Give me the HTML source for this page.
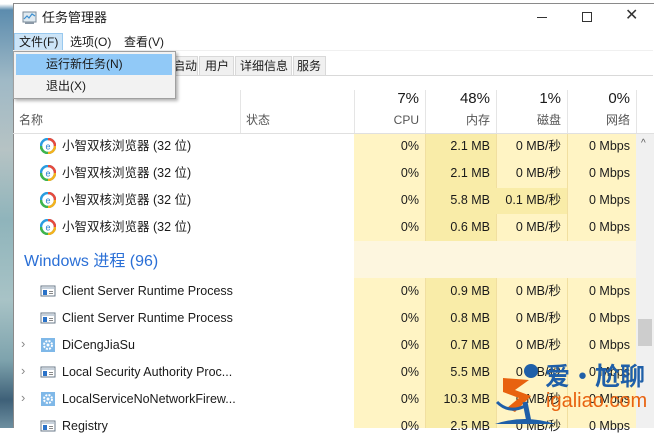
<!DOCTYPE html>
<html><head><meta charset="utf-8"><style>
*{margin:0;padding:0;box-sizing:border-box}
body{width:654px;height:428px;overflow:hidden;background:#fff;font-family:"Liberation Sans","Noto Sans CJK SC",sans-serif;font-size:12px;color:#1a1a1a;position:relative;line-height:16px}
.a{position:absolute;white-space:nowrap}
.strip{left:0;top:0;width:13px;height:428px;background:linear-gradient(#fff 0,#fff 4px,#5c8cae 10px,#9fb9c6 80px,#b6c3c4 150px,#8fb4bb 220px,#a8c3c6 300px,#7ea3ad 360px,#3e6078 400px,#6d8fa0 428px)}
.win{left:13px;top:3px;width:641px;height:425px;background:#fff;border-left:1px solid #8a8a8a;border-top:1px solid #8a8a8a}
.col{top:134px;height:294px}
.r{text-align:right}
.v{font-size:12.5px;height:16px;line-height:16px}
</style></head><body>
<div class="a strip"></div>
<div class="a win"></div>
<svg class="a" style="left:22px;top:10px" width="16" height="16" viewBox="0 0 16 16"><rect x="1" y="2" width="13" height="10" fill="#dfe9f0" stroke="#7a8a99"/><polyline points="2,9 5,6 7,8 10,4 13,6" fill="none" stroke="#3c8fd0" stroke-width="1.2"/><rect x="3" y="12" width="9" height="2" fill="#8a98a6"/></svg>
<div class="a" style="left:42px;top:10px;font-size:13px">任务管理器</div>
<div class="a" style="left:537px;top:17px;width:10px;height:1px;background:#333"></div>
<div class="a" style="left:582px;top:12px;width:10px;height:10px;border:1px solid #333"></div>
<div class="a" style="left:625px;top:8px;font-size:16px;color:#333">✕</div>
<div class="a" style="left:14px;top:33px;width:49px;height:19px;background:#cce4f7;border:1px solid #99c9ef"></div>
<div class="a" style="left:19px;top:34px">文件(F)</div>
<div class="a" style="left:70px;top:34px">选项(O)</div>
<div class="a" style="left:124px;top:34px">查看(V)</div>
<div class="a" style="left:13px;top:50px;width:640px;height:1px;background:#f0f0f0"></div>
<div class="a" style="left:150px;top:55px;width:503px;height:21px;border-bottom:1px solid #d9d9d9"></div>
<div class="a" style="left:150px;top:56px;width:48px;height:20px;border:1px solid #d9d9d9;background:#f0f0f0"></div>
<div class="a" style="left:173px;top:58px">启动</div>
<div class="a" style="left:199px;top:56px;width:35px;height:20px;border:1px solid #d9d9d9;background:#f0f0f0"></div>
<div class="a" style="left:205px;top:58px">用户</div>
<div class="a" style="left:235px;top:56px;width:57px;height:20px;border:1px solid #d9d9d9;background:#f0f0f0"></div>
<div class="a" style="left:240px;top:58px">详细信息</div>
<div class="a" style="left:293px;top:56px;width:33px;height:20px;border:1px solid #d9d9d9;background:#f0f0f0"></div>
<div class="a" style="left:297px;top:58px">服务</div>
<div class="a" style="left:13px;top:51px;width:163px;height:48px;background:#f2f2f2;border:1px solid #a0a0a0;box-shadow:2px 2px 3px rgba(0,0,0,.3)"></div>
<div class="a" style="left:16px;top:54px;width:156px;height:21px;background:#91c9f7"></div>
<div class="a" style="left:46px;top:56px">运行新任务(N)</div>
<div class="a" style="left:46px;top:78px">退出(X)</div>
<div class="a" style="left:240px;top:90px;width:1px;height:44px;background:#e5e5e5"></div>
<div class="a" style="left:354px;top:90px;width:1px;height:44px;background:#e5e5e5"></div>
<div class="a" style="left:425px;top:90px;width:1px;height:44px;background:#e5e5e5"></div>
<div class="a" style="left:496px;top:90px;width:1px;height:44px;background:#e5e5e5"></div>
<div class="a" style="left:567px;top:90px;width:1px;height:44px;background:#e5e5e5"></div>
<div class="a" style="left:636px;top:90px;width:1px;height:44px;background:#e5e5e5"></div>
<div class="a" style="left:19px;top:112px;color:#555">名称</div>
<div class="a" style="left:246px;top:112px;color:#555">状态</div>
<div class="a r" style="left:354px;width:65px;top:91px;font-size:15px">7%</div>
<div class="a r" style="left:354px;width:65px;top:112px;color:#555">CPU</div>
<div class="a r" style="left:425px;width:65px;top:91px;font-size:15px">48%</div>
<div class="a r" style="left:425px;width:65px;top:112px;color:#555">内存</div>
<div class="a r" style="left:496px;width:65px;top:91px;font-size:15px">1%</div>
<div class="a r" style="left:496px;width:65px;top:112px;color:#555">磁盘</div>
<div class="a r" style="left:567px;width:63px;top:91px;font-size:15px">0%</div>
<div class="a r" style="left:567px;width:63px;top:112px;color:#555">网络</div>
<div class="a" style="left:13px;top:133px;width:641px;height:1px;background:#e0e0e0"></div>
<div class="a col" style="left:354px;width:71px;background:#fff4c4"></div>
<div class="a col" style="left:425px;width:71px;background:#f9eca8;border-left:1px solid #f1dfa0"></div>
<div class="a col" style="left:496px;width:71px;background:#fff4c4;border-left:1px solid #f1dfa0"></div>
<div class="a col" style="left:567px;width:69px;background:#fff4c4;border-left:1px solid #f1dfa0"></div>
<div class="a" style="left:496px;top:188px;width:71px;height:26px;background:#f9eca8"></div>
<div class="a" style="left:354px;top:241px;width:282px;height:37px;background:#fdf6df"></div>
<div class="a" style="left:636px;top:134px;width:18px;height:294px;background:#f0f0f0"></div>
<div class="a" style="left:641px;top:136px;font-size:10px;color:#555">^</div>
<div class="a" style="left:638px;top:319px;width:14px;height:27px;background:#cdcdcd"></div>
<div id="rows"></div>
<div class="a" style="left:24px;top:253px;font-size:16px;color:#2a6fd6;line-height:18px">Windows 进程 (96)</div>
<svg width="0" height="0" style="position:absolute"><defs>
<symbol id="e" viewBox="0 0 16 16"><circle cx="8" cy="8" r="7" fill="none" stroke="#2a9de0" stroke-width="2.5"/><path d="M8 1a7 7 0 0 1 7 7" fill="none" stroke="#e84a3c" stroke-width="2.5"/><path d="M15 8a7 7 0 0 1-7 7" fill="none" stroke="#f5b21c" stroke-width="2.5"/><path d="M8 15a7 7 0 0 1-7-7" fill="none" stroke="#3fb54a" stroke-width="2.5"/><text x="8" y="11.5" font-size="9" text-anchor="middle" fill="#2a7fd0" font-family="Liberation Sans">e</text></symbol>
<symbol id="w" viewBox="0 0 16 16"><rect x="1" y="3" width="14" height="10" fill="#fff" stroke="#6a7a8a"/><rect x="2" y="4" width="12" height="2" fill="#c8d2dc"/><rect x="3" y="7" width="4" height="5" fill="#2a72c8"/><rect x="9" y="8" width="4" height="1" fill="#888"/><rect x="9" y="10" width="4" height="1" fill="#888"/></symbol>
<symbol id="g" viewBox="0 0 16 16"><rect x="1" y="1" width="14" height="14" fill="#7fb8e8"/><circle cx="8" cy="8" r="4" fill="none" stroke="#fff" stroke-width="2" stroke-dasharray="2 1.2"/><circle cx="8" cy="8" r="1.5" fill="#fff"/></symbol>
</defs></svg>
<script>
var rows=[
[146,'e','小智双核浏览器 (32 位)','0%','2.1 MB','0 MB/秒','0 Mbps',0],
[173,'e','小智双核浏览器 (32 位)','0%','2.1 MB','0 MB/秒','0 Mbps',0],
[200,'e','小智双核浏览器 (32 位)','0%','5.8 MB','0.1 MB/秒','0 Mbps',0],
[227,'e','小智双核浏览器 (32 位)','0%','0.6 MB','0 MB/秒','0 Mbps',0],
[291,'w','Client Server Runtime Process','0%','0.9 MB','0 MB/秒','0 Mbps',0],
[318,'w','Client Server Runtime Process','0%','0.8 MB','0 MB/秒','0 Mbps',0],
[345,'g','DiCengJiaSu','0%','0.7 MB','0 MB/秒','0 Mbps',1],
[372,'w','Local Security Authority Proc...','0%','5.5 MB','0 MB/秒','0 Mbps',1],
[399,'g','LocalServiceNoNetworkFirew...','0%','10.3 MB','0 MB/秒','0 Mbps',1],
[426,'w','Registry','0%','2.5 MB','0 MB/秒','0 Mbps',0]];
var h='';
rows.forEach(function(r){var y=r[0]-8;
if(r[7])h+='<div class="a" style="left:21px;top:'+(y-1)+'px;color:#888;font-size:13px">&#8250;</div>';
h+='<svg class="a" style="left:40px;top:'+y+'px" width="16" height="16"><use href="#'+r[1]+'"/></svg>';
h+='<div class="a v" style="left:62px;top:'+y+'px">'+r[2]+'</div>';
h+='<div class="a r v" style="left:354px;width:65px;top:'+y+'px">'+r[3]+'</div>';
h+='<div class="a r v" style="left:425px;width:65px;top:'+y+'px">'+r[4]+'</div>';
h+='<div class="a r v" style="left:496px;width:65px;top:'+y+'px">'+r[5]+'</div>';
h+='<div class="a r v" style="left:567px;width:63px;top:'+y+'px">'+r[6]+'</div>';});
document.getElementById('rows').innerHTML=h;
</script>
<svg class="a" style="left:495px;top:362px" width="60" height="66" viewBox="0 0 60 66"><circle cx="36" cy="9" r="7" fill="#1f5fa8"/><path d="M8 16 L34 18 L20 28 L36 34 L20 50 L12 46 L24 36 L8 30 Z" fill="#e8620f"/><path d="M2 40 Q14 52 30 44" fill="none" stroke="#1f5fa8" stroke-width="3"/><path d="M30 40 L34 60" stroke="#1f5fa8" stroke-width="5"/><path d="M0 62 Q30 52 60 62 Z" fill="#1f5fa8"/></svg>
<div class="a" style="left:545px;top:361px;font-size:25px;font-weight:bold;color:#1f5fa8;font-family:'Noto Sans CJK SC',sans-serif;line-height:28px">爱·尬聊</div>
<div class="a" style="left:546px;top:391px;font-size:20px;color:#e8620f;line-height:20px">igaliao.com</div>
</body></html>
